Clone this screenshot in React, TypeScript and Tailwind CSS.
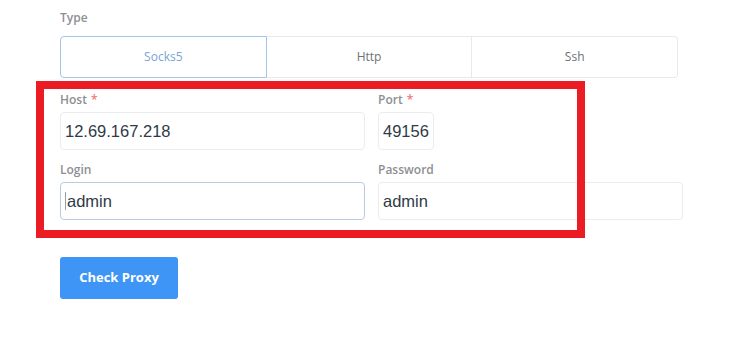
import React from "react";

const sans = "font-['Open_Sans',sans-serif]";
const inputFont = "font-['Liberation_Sans',Arial,sans-serif]";

function Label({ text, required }: { text: string; required?: boolean }) {
  return (
    <div className={`${sans} text-[12px] leading-[16px] font-semibold text-[#8d8f94]`}>
      {text}
      {required && <span className="ml-1 text-[#f0797d]">*</span>}
    </div>
  );
}

function Field({
  value,
  width,
  focused,
  cursor,
}: {
  value: string;
  width: string;
  focused?: boolean;
  cursor?: boolean;
}) {
  return (
    <div
      className={`${width} h-[38px] mt-[4px] rounded-[4px] border bg-white flex items-center pl-[4px] ${inputFont} text-[16.5px] text-[#2f3a46] ${
        focused ? "border-[#b9cbe6]" : "border-[#ebecee]"
      }`}
    >
      {cursor && <span className="w-px h-[18px] bg-[#9aa0a8] mr-[1px]" />}
      {value}
    </div>
  );
}

export default function App() {
  const types = ["Socks5", "Http", "Ssh"];
  return (
    <div className="relative w-[731px] h-[350px] bg-white pl-[60px] pt-[9px]">
      <div className={`${sans} text-[12px] leading-[18px] font-semibold text-[#8d8f94]`}>Type</div>
      <div className="mt-[9px] w-[618px] h-[42px] flex">
        {types.map((t, i) => (
          <div
            key={t}
            className={`flex-1 flex items-center justify-center ${sans} text-[12px] ${
              i === 0
                ? "border border-[#a3c3e8] rounded-l-[4px] text-[#7aa3d6]"
                : "border-y border-r border-[#e8e9eb] text-[#6d7178]"
            } ${i === 2 ? "rounded-r-[4px]" : ""}`}
          >
            {t}
          </div>
        ))}
      </div>

      <div className="mt-[14px] grid grid-cols-[305px_305px] gap-x-[13px]">
        <div>
          <Label text="Host" required />
          <Field value="12.69.167.218" width="w-[305px]" />
        </div>
        <div>
          <Label text="Port" required />
          <Field value="49156" width="w-[56px]" />
        </div>
        <div className="mt-[12px]">
          <Label text="Login" />
          <Field value="admin" width="w-[305px]" focused cursor />
        </div>
        <div className="mt-[12px]">
          <Label text="Password" />
          <Field value="admin" width="w-[305px]" />
        </div>
      </div>

      <button
        className={`mt-[37px] w-[118px] h-[42px] rounded-[3px] bg-[#3e95f5] text-white ${sans} text-[13px] font-bold`}
      >
        Check Proxy
      </button>

      <div className="absolute left-[36px] top-[81px] w-[549px] h-[157px] border-[8px] border-[#ec1c24] pointer-events-none" />
    </div>
  );
}
